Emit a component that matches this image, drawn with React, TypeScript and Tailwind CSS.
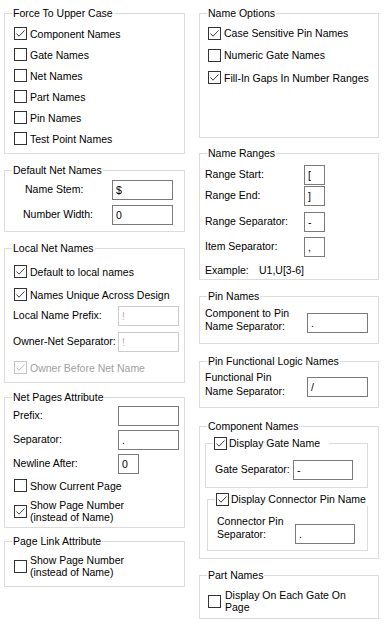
import clsx from 'clsx';

function Check({ checked, disabled }: { checked?: boolean; disabled?: boolean }) {
  return (
    <span
      className={clsx(
        'w-[13px] h-[13px] border shrink-0 flex items-center justify-center bg-white',
        disabled ? 'border-[#c4c4c4]' : 'border-[#333333]'
      )}
    >
      {checked && (
        <svg width="11" height="11" viewBox="0 0 11 11">
          <path d="M1.5 5.5 L4 8.2 L9.5 2.5" fill="none" stroke={disabled ? '#c0c0c0' : '#3c3c3c'} strokeWidth="1" />
        </svg>
      )}
    </span>
  );
}

function CheckRow({ label, checked, disabled, className }: { label: React.ReactNode; checked?: boolean; disabled?: boolean; className?: string }) {
  return (
    <div className={clsx('flex items-center', className)}>
      <Check checked={checked} disabled={disabled} />
      <span className={clsx('ml-[3px] leading-[12px]', disabled && 'text-[#a0a0a0]')}>{label}</span>
    </div>
  );
}

function Field({ value, className, disabled }: { value?: string; className?: string; disabled?: boolean }) {
  return (
    <div
      className={clsx(
        'h-[20px] border bg-white pl-[3px] flex items-center shrink-0 leading-none',
        disabled ? 'border-[#cccccc] text-[#e0a0a8]' : 'border-[#7a7a7a]',
        className
      )}
    >
      {value}
    </div>
  );
}

function Group({ title, className, children }: { title: React.ReactNode; className?: string; children?: React.ReactNode }) {
  return (
    <div className={clsx('relative border border-[#dcdcdc] shrink-0', className)}>
      <span className="absolute -top-[7px] left-[7px] bg-white px-px leading-[13px] whitespace-nowrap">{title}</span>
      {children}
    </div>
  );
}

export default function App() {
  return (
    <div className="w-[391px] h-[629px] bg-white text-black text-[10.5px] font-['Liberation_Sans',Arial,sans-serif] flex gap-[14px] pl-[4px] pt-[13px] overflow-hidden">
      {/* left column */}
      <div className="w-[181px] flex flex-col">
        <Group title="Force To Upper Case" className="h-[141px] pt-[9px] pl-[9px]">
          <CheckRow label="Component Names" checked className="h-[21px]" />
          <CheckRow label="Gate Names" className="h-[21px]" />
          <CheckRow label="Net Names" className="h-[21px]" />
          <CheckRow label="Part Names" className="h-[21px]" />
          <CheckRow label="Pin Names" className="h-[21px]" />
          <CheckRow label="Test Point Names" className="h-[21px]" />
        </Group>

        <Group title="Default Net Names" className="h-[62px] mt-[16px] pt-[9px]">
          <div className="flex items-center pl-[20px]">
            <span className="w-[87px]">Name Stem:</span>
            <Field value="$" className="w-[61px]" />
          </div>
          <div className="flex items-center pl-[18px] mt-[5px]">
            <span className="w-[89px]">Number Width:</span>
            <Field value="0" className="w-[61px]" />
          </div>
        </Group>

        <Group title="Local Net Names" className="h-[135px] mt-[16px] pt-[11px] pl-[9px]">
          <CheckRow label="Default to local names" checked className="h-[23px]" />
          <CheckRow label="Names Unique Across Design" checked className="h-[23px]" />
          <div className="flex items-center -ml-px">
            <span className="w-[105px]">Local Name Prefix:</span>
            <Field value="!" disabled className="w-[61px]" />
          </div>
          <div className="flex items-center -ml-px mt-[6px]">
            <span className="w-[105px]">Owner-Net Separator:</span>
            <Field value="!" disabled className="w-[61px]" />
          </div>
          <CheckRow label="Owner Before Net Name" checked disabled className="h-[21px] mt-[5px]" />
        </Group>

        <Group title="Net Pages Attribute" className="h-[131px] mt-[14px] pt-[8px] pl-[8px]">
          <div className="flex items-center">
            <span className="w-[105px]">Prefix:</span>
            <Field className="w-[61px]" />
          </div>
          <div className="flex items-center mt-[4px]">
            <span className="w-[105px]">Separator:</span>
            <Field value="." className="w-[61px]" />
          </div>
          <div className="flex items-center mt-[4px]">
            <span className="w-[105px]">Newline After:</span>
            <Field value="0" className="w-[21px]" />
          </div>
          <CheckRow label="Show Current Page" className="h-[21px] mt-px ml-px" />
          <CheckRow
            label={<>Show Page Number<br />(instead of Name)</>}
            checked
            className="mt-[3px] ml-px"
          />
        </Group>

        <Group title="Page Link Attribute" className="h-[46px] mt-[13px] pt-[12px] pl-[9px]">
          <CheckRow label={<>Show Page Number<br />(instead of Name)</>} />
        </Group>
      </div>

      {/* right column */}
      <div className="w-[180px] flex flex-col">
        <Group title="Name Options" className="h-[125px] pt-[8px] pl-[8px]">
          <CheckRow label="Case Sensitive Pin Names" checked className="h-[22px]" />
          <CheckRow label="Numeric Gate Names" className="h-[22px]" />
          <CheckRow label="Fill-In Gaps In Number Ranges" checked className="h-[23px]" />
        </Group>

        <Group title="Name Ranges" className="h-[127px] mt-[15px] pt-[11px] pl-[5px]">
          <div className="flex items-center">
            <span className="w-[99px]">Range Start:</span>
            <Field value="[" className="w-[21px]" />
          </div>
          <div className="flex items-center mt-px">
            <span className="w-[99px]">Range End:</span>
            <Field value="]" className="w-[21px]" />
          </div>
          <div className="flex items-center mt-[6px]">
            <span className="w-[99px]">Range Separator:</span>
            <Field value="-" className="w-[21px]" />
          </div>
          <div className="flex items-center mt-[5px]">
            <span className="w-[99px]">Item Separator:</span>
            <Field value="," className="w-[21px]" />
          </div>
          <div className="flex items-center mt-[6px] leading-[14px]">
            <span className="w-[54px]">Example:</span>
            <span>U1,U[3-6]</span>
          </div>
        </Group>

        <Group title="Pin Names" className="h-[48px] mt-[16px] pt-[10px] pl-[5px]">
          <div className="flex items-start">
            <span className="w-[102px] leading-[13px]">Component to Pin<br />Name Separator:</span>
            <Field value="." className="w-[61px] mt-[6px]" />
          </div>
        </Group>

        <Group title="Pin Functional Logic Names" className="h-[47px] mt-[17px] pt-[8px] pl-[5px]">
          <div className="flex items-start">
            <span className="w-[102px] leading-[14px]">Functional Pin<br />Name Separator:</span>
            <Field value="/" className="w-[61px] mt-[7px]" />
          </div>
        </Group>

        <Group title="Component Names" className="h-[133px] mt-[18px] pt-[16px]">
          <Group
            title={<span className="flex items-center pr-[8px]"><Check checked /><span className="ml-[2px]">Display Gate Name</span></span>}
            className="h-[45px] w-[163px] ml-[5px] pt-[16px] pl-[9px]"
          >
            <div className="flex items-center">
              <span className="w-[78px]">Gate Separator:</span>
              <Field value="-" className="w-[60px]" />
            </div>
          </Group>
          <Group
            title={<span className="flex items-center pr-[3px]"><Check checked /><span className="ml-[2px]">Display Connector Pin Name</span></span>}
            className="h-[52px] w-[161px] ml-[7px] mt-[11px] pt-[15px] pl-[9px]"
          >
            <div className="flex items-start">
              <span className="w-[78px] leading-[13px]">Connector Pin<br />Separator:</span>
              <Field value="." className="w-[60px] mt-[9px]" />
            </div>
          </Group>
        </Group>

        <Group title="Part Names" className="h-[44px] mt-[16px] pt-[13px] pl-[8px]">
          <div className="flex items-center">
            <Check />
            <span className="ml-[4px] leading-[12px]">Display On Each Gate On<br />Page</span>
          </div>
        </Group>
      </div>
    </div>
  );
}
